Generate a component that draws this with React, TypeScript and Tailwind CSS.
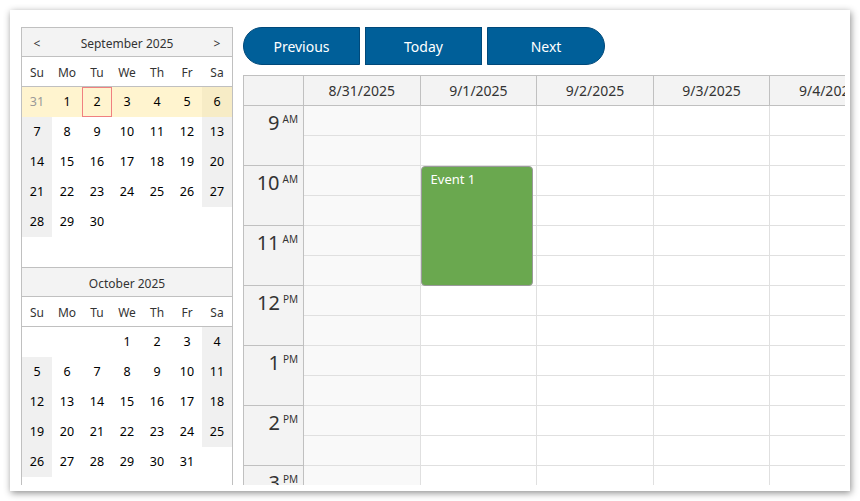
import React from "react";

type Cell = { d: number | null; other?: boolean };

const september: Cell[][] = [
  [{ d: 31, other: true }, { d: 1 }, { d: 2 }, { d: 3 }, { d: 4 }, { d: 5 }, { d: 6 }],
  [{ d: 7 }, { d: 8 }, { d: 9 }, { d: 10 }, { d: 11 }, { d: 12 }, { d: 13 }],
  [{ d: 14 }, { d: 15 }, { d: 16 }, { d: 17 }, { d: 18 }, { d: 19 }, { d: 20 }],
  [{ d: 21 }, { d: 22 }, { d: 23 }, { d: 24 }, { d: 25 }, { d: 26 }, { d: 27 }],
  [{ d: 28 }, { d: 29 }, { d: 30 }, { d: null }, { d: null }, { d: null }, { d: null }],
  [{ d: null }, { d: null }, { d: null }, { d: null }, { d: null }, { d: null }, { d: null }],
];

const october: Cell[][] = [
  [{ d: null }, { d: null }, { d: null }, { d: 1 }, { d: 2 }, { d: 3 }, { d: 4 }],
  [{ d: 5 }, { d: 6 }, { d: 7 }, { d: 8 }, { d: 9 }, { d: 10 }, { d: 11 }],
  [{ d: 12 }, { d: 13 }, { d: 14 }, { d: 15 }, { d: 16 }, { d: 17 }, { d: 18 }],
  [{ d: 19 }, { d: 20 }, { d: 21 }, { d: 22 }, { d: 23 }, { d: 24 }, { d: 25 }],
  [{ d: 26 }, { d: 27 }, { d: 28 }, { d: 29 }, { d: 30 }, { d: 31 }, { d: null }],
  [{ d: null }, { d: null }, { d: null }, { d: null }, { d: null }, { d: null }, { d: null }],
];

const dayNames = ["Su", "Mo", "Tu", "We", "Th", "Fr", "Sa"];

const Month = ({
  title,
  weeks,
  arrows,
  selectedWeek,
}: {
  title: string;
  weeks: Cell[][];
  arrows?: boolean;
  selectedWeek?: number;
}) => {
  return (
    <div className="border-t border-[#c0c0c0]">
      <div className="flex h-[29px] items-center justify-between border-b border-[#c0c0c0] bg-[#f3f3f3] pt-[3px] text-[12px] text-[#333]">
        <span className="w-[30px] text-center">{arrows ? "<" : ""}</span>
        <span>{title}</span>
        <span className="w-[30px] text-center">{arrows ? ">" : ""}</span>
      </div>
      <div className="grid h-[30px] grid-cols-7 items-center border-b border-[#c0c0c0] pt-[2px] text-[12px] text-[#333]">
        {dayNames.map((n) => (
          <div key={n} className="text-center">
            {n}
          </div>
        ))}
      </div>
      {weeks.map((week, wi) => (
        <div key={wi} className="grid h-[30px] grid-cols-7">
          {week.map((c, ci) => {
            const weekend = ci === 0 || ci === 6;
            const selected = wi === selectedWeek;
            const today = selected && c.d === 2;
            let bg = "bg-white";
            if (selected) bg = ci === 6 ? "bg-[#f7ecc6]" : "bg-[#fff4cf]";
            else if (weekend && c.d !== null) bg = "bg-[#f0f0f0]";
            return (
              <div
                key={ci}
                className={`flex items-center justify-center pt-[1px] text-[12.5px] ${bg} ${
                  c.other ? "text-[#999]" : "text-[#000]"
                } ${today ? "border border-[#f08080]" : ""}`}
              >
                {c.d ?? ""}
              </div>
            );
          })}
        </div>
      ))}
    </div>
  );
};

const hours = [
  { h: "9", s: "AM" },
  { h: "10", s: "AM" },
  { h: "11", s: "AM" },
  { h: "12", s: "PM" },
  { h: "1", s: "PM" },
  { h: "2", s: "PM" },
  { h: "3", s: "PM" },
];

const days = ["8/31/2025", "9/1/2025", "9/2/2025", "9/3/2025", "9/4/2025"];

export default function App() {
  return (
    <div className="h-[501px] w-[860px] bg-white p-[10px] font-['Noto_Sans','Open_Sans',sans-serif]">
      <div className="h-[481px] w-[840px] bg-white pr-[5px] pb-[6px] shadow-[1px_2px_7px_rgba(0,0,0,0.45)]">
        <div className="flex h-full w-full gap-[10px] overflow-hidden pl-[11px] pt-[17px]">
          {/* navigator */}
          <div className="w-[212px] shrink-0 border-x border-[#c0c0c0]">
            <Month title="September 2025" weeks={september} arrows selectedWeek={0} />
            <Month title="October 2025" weeks={october} />
          </div>

          {/* calendar */}
          <div className="flex min-w-0 flex-1 flex-col">
            <div className="flex h-[38px] shrink-0 gap-[5px] text-[14px] text-white">
              <button className="w-[117px] rounded-l-full border border-[#00497a] bg-[#005f99]">Previous</button>
              <button className="w-[117px] border border-[#00497a] bg-[#005f99]">Today</button>
              <button className="w-[118px] rounded-r-full border border-[#00497a] bg-[#005f99]">Next</button>
            </div>

            <div className="mt-[10px] flex shrink-0 border-l border-t border-[#c0c0c0]">
              <div className="w-[60px] shrink-0 border-r border-[#c0c0c0] bg-[#f3f3f3]">
                <div className="h-[30px] border-b border-[#c0c0c0]" />
                {hours.map((x) => (
                  <div key={x.h} className="flex h-[60px] justify-end border-b border-[#c0c0c0] pr-[5px] pt-[5px] text-[#333]">
                    <span className="text-[20px] leading-[24px]">{x.h}</span>
                    <span className="ml-[3px] text-[10px] leading-[16px]">{x.s}</span>
                  </div>
                ))}
              </div>
              {days.map((d, i) => (
                <div key={d} className="w-[116.6px] shrink-0">
                  <div className="flex h-[30px] items-center justify-center border-b border-r border-[#c0c0c0] bg-[#f3f3f3] text-[14px] text-[#333]">
                    {d}
                  </div>
                  <div className={`relative ${i === 0 ? "bg-[#f9f9f9]" : "bg-white"}`}>
                    {Array.from({ length: 14 }).map((_, k) => (
                      <div key={k} className="h-[30px] border-b border-r border-[#e0e0e0]" />
                    ))}
                    {i === 1 && (
                      <div className="absolute left-0 top-[60px] h-[120px] w-[112px] rounded-[4px] border border-[#9a9a9a] bg-[#6aa84f] pl-[9px] pt-[3px] text-[13px] text-white">
                        Event 1
                      </div>
                    )}
                  </div>
                </div>
              ))}
            </div>
          </div>
        </div>
      </div>
    </div>
  );
}
